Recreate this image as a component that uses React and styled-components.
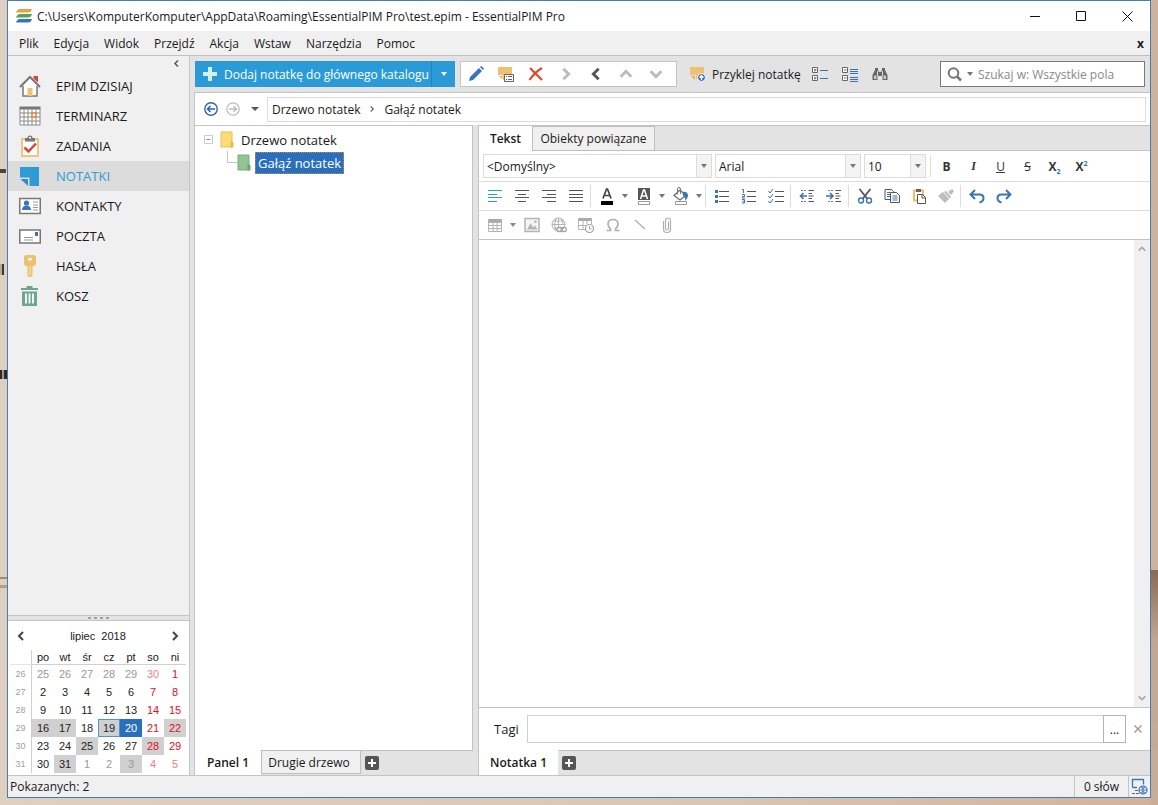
import { useState } from 'react';
import styled, { createGlobalStyle } from 'styled-components';

const GlobalStyle = createGlobalStyle`
  * {
    box-sizing: border-box;
  }
  body {
    margin: 0;
    font-family: 'Open Sans', 'Noto Sans', sans-serif;
    font-size: 12px;
    color: #1a1a1a;
  }
  button,
  input,
  select,
  textarea {
    font: inherit;
    color: inherit;
    margin: 0;
    padding: 0;
    border: 0;
    border-radius: 0;
    background: none;
    outline: none;
  }
  button {
    white-space: nowrap;
  }
  svg {
    display: block;
    flex: none;
  }
`;

const Desktop = styled.div`
  display: flex;
  height: 100vh;
  min-height: 600px;
  padding: 0 7px 7px;
  background:
    linear-gradient(#4a443f, #4a443f) 0 169px / 6px 4px no-repeat,
    linear-gradient(90deg, #b7a99c 2px, #3c3733 2px) 0 264px / 4px 11px no-repeat,
    linear-gradient(90deg, #2b2a29 2px, #a3968a 2px, #a3968a 4px, #2b2a29 4px) 0 370px / 7px 9px
      no-repeat,
    linear-gradient(#a08a76, #a08a76) 0 577px / 7px 2px no-repeat,
    linear-gradient(#b39e8b, #b39e8b) 0 585px / 7px 3px no-repeat,
    linear-gradient(#8d6a52, #c4a690 30%, #c9ad97) 100% 100% / 7px 235px no-repeat,
    linear-gradient(90deg, #dfcfc0, #d9c7b5 60%, #d0b29c);
`;
const Window = styled.div`
  flex: 1;
  min-width: 0;
  display: flex;
  flex-direction: column;
  border: 1px solid #3f7fb5;
  background: #e3e3e3;
`;
const TitleBar = styled.header`
  display: flex;
  align-items: center;
  height: 30px;
  padding-left: 8px;
  gap: 5px;
  background: #fff;
`;
const Title = styled.h1`
  flex: 1;
  margin: 0;
  font-size: 12px;
  font-weight: 400;
`;
const WindowButton = styled.button`
  display: grid;
  place-items: center;
  width: 46px;
  height: 30px;
  margin-left: -5px;
`;
const MenuBar = styled.nav`
  display: flex;
  align-items: center;
  height: 25px;
  padding: 0 6px 0 3px;
  background: #f0f0f0;
  border-bottom: 1px solid #bfbfbf;
`;
const MenuItem = styled.button`
  padding: 0 7px 0 8px;
`;
const MenuClose = styled.button`
  margin-left: auto;
  font-weight: 700;
`;

const Body = styled.div`
  flex: 1;
  min-height: 0;
  display: flex;
  gap: 4px;
`;
const Sidebar = styled.aside`
  display: flex;
  flex-direction: column;
  width: 182px;
  border-right: 1px solid #c4c4c4;
`;
const SidebarTop = styled.div`
  flex: 1;
  background: #f0f0f0;
  border-bottom: 1px solid #c4c4c4;
`;
const Collapse = styled.button`
  display: block;
  height: 15px;
  margin-left: auto;
  padding-right: 8px;
`;
const ModuleButton = styled.button`
  display: flex;
  align-items: center;
  gap: 15px;
  width: 100%;
  height: 30px;
  padding-left: 11px;
  font-size: 13px;
  font-weight: 500;
  color: ${({ $active }) => ($active ? '#2e9bd6' : '#1a1a1a')};
  background: ${({ $active }) => ($active ? '#dcdcdc' : 'transparent')};
`;
const Grip = styled.div`
  display: flex;
  align-items: center;
  justify-content: center;
  gap: 3px;
  height: 5px;
  border-bottom: 1px solid #c4c4c4;
`;
const GripDot = styled.i`
  width: 3px;
  height: 2px;
  background: #a0a0a0;
`;

const Calendar = styled.section`
  height: 154px;
  padding: 0 3px 0 2px;
  background: #fff;
  font-family: 'Liberation Sans', Arial, sans-serif;
  font-size: 11px;
`;
const CalendarHead = styled.div`
  display: flex;
  align-items: center;
  justify-content: space-between;
  height: 29px;
  padding: 0 5px;
  white-space: pre;
`;
const MonthTable = styled.table`
  width: 100%;
  table-layout: fixed;
  border-spacing: 0;
  text-align: center;

  th,
  td {
    height: 18px;
    padding: 0;
    font-weight: 400;
    line-height: 16px;
  }
  thead th {
    height: 15px;
    line-height: 12px;
    border-bottom: 1px solid #d0d0d0;
  }
  tr > :first-child {
    color: #a0a0a0;
    font-size: 9px;
    border-right: 1px solid #d0d0d0;
  }
  thead tr > :first-child {
    border-bottom-color: #e4e4e4;
  }
`;
const Day = styled.td`
  color: ${({ $outside, $weekend }) =>
    $weekend ? ($outside ? '#f08080' : '#e01020') : $outside ? '#999' : '#222'};
  ${({ $busy }) => $busy && 'background: #d0d0d0;'}
  ${({ $selected }) => $selected && 'background: #2a6fbd; color: #fff;'}
  ${({ $today }) => $today && 'box-shadow: inset 0 0 0 1px #4a96d0;'}
`;

const Workspace = styled.main`
  flex: 1;
  min-width: 0;
  display: flex;
  flex-direction: column;
`;
const Toolbar = styled.div`
  display: flex;
  align-items: center;
  height: 37px;
  padding: 0 5px 0 1px;
  border-bottom: 1px solid #c4c4c4;
`;
const AddNote = styled.div`
  display: flex;
  height: 26px;
  margin-right: 5px;
  color: #fff;
  background: #2b9bd8;
`;
const AddNoteButton = styled.button`
  display: flex;
  align-items: center;
  gap: 7px;
  width: 236px;
  padding-left: 8px;
`;
const AddNoteMore = styled.button`
  display: grid;
  place-items: center;
  width: 24px;
  border-left: 1px solid #2382ba;
`;
const ToolGroup = styled.div`
  display: flex;
  height: 26px;
  padding-right: 5px;
  margin-right: 12px;
  background: #fff;
  border: 1px solid #c4c4c4;
`;
const ToolButton = styled.button`
  display: grid;
  place-items: center;
  width: 30px;
  height: 24px;
`;
const StickButton = styled.button`
  display: flex;
  align-items: center;
  gap: 6px;
  height: 26px;
  margin-right: 4px;
`;
const Search = styled.label`
  display: flex;
  align-items: center;
  gap: 5px;
  width: 205px;
  height: 26px;
  margin-left: auto;
  padding-left: 6px;
  background: #fff;
  border: 1px solid #7a7a7a;
`;
const SearchInput = styled.input`
  flex: 1;
  min-width: 0;
  &::placeholder {
    color: #8a8a8a;
    opacity: 1;
  }
`;
const PathRow = styled.div`
  display: flex;
  align-items: center;
  height: 32px;
  padding: 0 4px 0 8px;
  background: #fff;
  border-left: 1px solid #c4c4c4;
`;
const PathButton = styled.button`
  display: grid;
  place-items: center;
  width: 16px;
  height: 24px;
  margin-right: 6px;
`;
const Path = styled.nav`
  flex: 1;
  display: flex;
  align-items: center;
  gap: 8px;
  height: 25px;
  margin-left: -2px;
  padding-left: 4px;
  border: 1px solid #dcdcdc;
`;
const PathLink = styled.a`
  color: inherit;
  text-decoration: none;
`;

const Panels = styled.div`
  flex: 1;
  min-height: 0;
  display: flex;
  gap: 5px;
`;
const TreePanel = styled.section`
  display: flex;
  flex-direction: column;
  width: 279px;
`;
const TreeArea = styled.div`
  flex: 1;
  padding: 2px 9px;
  background: #fff;
  border: 1px solid #c4c4c4;
  border-bottom: 0;
  font-size: 13px;
`;
const TreeRow = styled.div`
  display: flex;
  align-items: center;
  height: 23px;
  gap: ${({ $child }) => ($child ? 4 : 7)}px;
  padding-left: ${({ $child }) => ($child ? 23 : 0)}px;
`;
const TreeLabel = styled.span`
  ${({ $selected }) =>
    $selected &&
    `
    padding: 0 3px;
    line-height: 22px;
    color: #fff;
    background: #2a6fbd;
    outline: 1px dotted #c98a4a;
    outline-offset: -1px;
  `}
`;
const BottomTabs = styled.div`
  display: flex;
  height: 25px;
  border-left: 1px solid #c4c4c4;
`;
const TabFill = styled.div`
  flex: 1;
  display: flex;
  align-items: center;
  padding-left: 4px;
  border-top: 1px solid #c4c4c4;
`;
const BottomTab = styled.button`
  align-self: flex-start;
  width: ${({ $width }) => $width}px;
  height: ${({ $active }) => ($active ? 25 : 24)}px;
  padding-right: ${({ $active }) => ($active ? 0 : 4)}px;
  font-weight: ${({ $active }) => ($active ? 600 : 400)};
  background: ${({ $active }) => ($active ? '#fff' : '#f0f0f0')};
  border: ${({ $active }) => ($active ? '0' : '1px solid #bfbfbf')};
`;
const NotePanel = styled.section`
  flex: 1;
  min-width: 0;
  display: flex;
  flex-direction: column;
`;
const NoteTabs = styled.div`
  display: flex;
  height: 26px;
  border: 1px solid #c4c4c4;
  border-width: 1px 0 0 1px;
`;
const NoteTab = styled.button`
  width: ${({ $width }) => $width}px;
  height: 25px;
  font-weight: ${({ $active }) => ($active ? 600 : 400)};
  background: ${({ $active }) => ($active ? '#fff' : '#f0f0f0')};
  border: ${({ $active }) => ($active ? '0' : '1px solid #bfbfbf')};
`;
const TabRest = styled.div`
  flex: 1;
  border-bottom: 1px solid #c4c4c4;
`;
const NoteBody = styled.div`
  flex: 1;
  min-height: 0;
  display: flex;
  flex-direction: column;
  background: #fff;
  border-left: 1px solid #c4c4c4;
`;
const FormatRow = styled.div`
  display: flex;
  align-items: center;
  height: ${({ $height }) => $height}px;
  padding-left: ${({ $inset }) => $inset || 2}px;
  border-bottom: 1px solid ${({ $last }) => ($last ? '#c4c4c4' : '#dcdcdc')};
`;
const SelectBox = styled.div`
  display: grid;
  grid-template-columns: 1fr 15px;
  width: ${({ $width }) => $width}px;
  height: 24px;
  margin-right: 3px;
  border: 1px solid #dcdcdc;
`;
const SelectField = styled.select`
  grid-area: 1 / 1 / 2 / 3;
  width: 100%;
  padding-left: 3px;
  appearance: none;
`;
const SelectArrow = styled.span`
  grid-area: 1 / 2;
  display: grid;
  place-items: center;
  pointer-events: none;
  background: #f4f4f4;
  border-left: 1px solid #dcdcdc;
`;
const Divider = styled.i`
  width: 1px;
  height: 22px;
  margin: 0 2px 0 1px;
  background: #dcdcdc;
`;
const FormatButton = styled.button`
  display: grid;
  place-items: center;
  width: ${({ $narrow }) => ($narrow ? 10 : 27)}px;
  height: 24px;
  color: #333;
`;
const Letter = styled.span`
  font-size: 12px;
  font-weight: ${({ $light }) => ($light ? 500 : 700)};
  font-style: ${({ $italic }) => ($italic ? 'italic' : 'normal')};
  font-family: ${({ $italic }) => ($italic ? "'Liberation Serif', serif" : 'inherit')};
  text-decoration: ${({ $line }) => $line || 'none'};
  sub,
  sup {
    font-size: 7px;
    line-height: 0;
    color: #2a6fbd;
  }
`;
const Editor = styled.div`
  flex: 1;
  display: flex;
`;
const EditorText = styled.textarea`
  flex: 1;
  padding: 4px;
  resize: none;
  font-family: 'Liberation Sans', Arial, sans-serif;
`;
const ScrollTrack = styled.div`
  display: flex;
  flex-direction: column;
  justify-content: space-between;
  width: 16px;
  background: #f0f0f0;
`;
const ScrollButton = styled.button`
  display: grid;
  place-items: center;
  height: 18px;
`;
const TagRow = styled.div`
  display: flex;
  align-items: center;
  height: 43px;
  padding-left: 15px;
  border-top: 1px solid #c4c4c4;
`;
const TagLabel = styled.label`
  width: 33px;
  font-size: 13px;
`;
const TagInput = styled.input`
  flex: 1;
  min-width: 0;
  height: 28px;
  padding: 0 4px;
  border: 1px solid #d0d0d0;
`;
const TagMore = styled.button`
  width: 23px;
  height: 28px;
  margin-left: -1px;
  border: 1px solid #b4b4b4;
`;
const TagClose = styled.button`
  display: grid;
  place-items: center;
  width: 24px;
  height: 28px;
`;
const StatusBar = styled.footer`
  display: flex;
  align-items: center;
  height: 22px;
  padding-left: 2px;
  background: #f0f0f0;
  border-top: 1px solid #c4c4c4;
`;
const StatusCell = styled.div`
  display: grid;
  place-items: center;
  width: ${({ $width }) => $width}px;
  height: 21px;
  border-left: 1px solid #c4c4c4;
`;
const Spacer = styled.span`
  flex: 1;
`;

function Icon({ w = 18, h = 18, children, ...rest }) {
  return (
    <svg width={w} height={h} viewBox={`0 0 ${w} ${h}`} fill="none" aria-hidden="true" {...rest}>
      {children}
    </svg>
  );
}

function Chevron({ dir = 'right', color = '#555', size = 12, stroke = 2 }) {
  const paths = {
    right: 'M4 2l4 4-4 4',
    left: 'M8 2L4 6l4 4',
    up: 'M2 8l4-4 4 4',
    down: 'M2 4l4 4 4-4',
  };
  return (
    <svg width={size} height={size} viewBox="0 0 12 12" fill="none" aria-hidden="true">
      <path d={paths[dir]} stroke={color} strokeWidth={stroke} />
    </svg>
  );
}

function Caret({ color = '#777', w = 6 }) {
  return (
    <svg width={w} height="4" viewBox="0 0 6 4" preserveAspectRatio="none" aria-hidden="true">
      <path d="M0 0h6L3 4z" fill={color} />
    </svg>
  );
}

function PlusBox() {
  return (
    <Icon w={14} h={14}>
      <rect width="14" height="14" rx="2" fill="#555" />
      <path d="M7 3v8M3 7h8" stroke="#fff" strokeWidth="2" />
    </Icon>
  );
}

const moduleIcons = {
  home: (
    <Icon w={22} h={22}>
      <path d="M14.500 1h4.500v6.500l-4.500-4z" fill="#d9453d" />
      <path d="M4 11v10h14V11L11 3.5z" fill="#fff" />
      <path d="M4 11v10h14V11" stroke="#777" strokeWidth="1.5" />
      <path d="M1 12L11 2l10 10" stroke="#777" strokeWidth="2" />
      <path d="M8.500 13h5v8h-5z" fill="#eec277" />
    </Icon>
  ),
  calendar: (
    <Icon w={22} h={22}>
      <path d="M1 3h20v17H1z" fill="#fff" />
      <path d="M.5 1.500h21v3H.5z" fill="#777" />
      <path
        d="M1 4v16M5 4v16M9 4v16M13 4v16M17 4v16M21 4v16M1 8h20M1 12h20M1 16h20M1 20h20"
        stroke="#8a8a8a"
      />
      <path d="M13 8h4v4h-4z" fill="#fff" stroke="#e58a3c" strokeWidth="1.500" />
    </Icon>
  ),
  tasks: (
    <Icon w={22} h={22}>
      <path d="M3 4h16v17H3z" fill="#fff" stroke="#f2c480" strokeWidth="2" />
      <path d="M6 3h2.500a2.500 2.500 0 0 1 5 0H16v3.500H6z" fill="#777" />
      <circle cx="11" cy="2.800" r="1" fill="#fff" />
      <path d="M5.500 12.500l4 4 7.500-8" stroke="#d9453d" strokeWidth="2.500" />
    </Icon>
  ),
  notes: (
    <Icon w={22} h={22}>
      <path d="M1 2h19v19h-9.500v-8.500H1z" fill="#2e9bd6" />
      <path d="M1.500 14H9v7z" fill="#2a8fc8" />
    </Icon>
  ),
  contacts: (
    <Icon w={22} h={22}>
      <path d="M.750 3.500h20.500v15H.750z" fill="#fff" stroke="#777" strokeWidth="1.500" />
      <circle cx="7.500" cy="8" r="2.600" fill="#3a74b8" />
      <path d="M3 15c0-3 2-4.500 4.500-4.500S12 12 12 15z" fill="#3a74b8" />
      <path d="M14 7h5M14 10h5M14 12.500h5M14 15h5" stroke="#999" />
    </Icon>
  ),
  mail: (
    <Icon w={22} h={22}>
      <path d="M.750 5h20.500v13H.750z" fill="#fff" stroke="#777" strokeWidth="1.500" />
      <path d="M16 7h3v4h-3z" fill="#3a74b8" />
      <path d="M5 12.500h9M5 15h9" stroke="#999" />
    </Icon>
  ),
  key: (
    <Icon w={22} h={22}>
      <path
        fillRule="evenodd"
        d="M5 1.500L7 0h8l2 1.500v8L13.500 12v9L11 22.500 8.500 21v-9L5 9.500zM9 3v2.500h4V3z"
        fill="#ecc270"
      />
      <path d="M11 11v9" stroke="#fff" strokeWidth="1" opacity=".7" />
    </Icon>
  ),
  trash: (
    <Icon w={22} h={22}>
      <path d="M2 3h17v2H2zM7.500 1h6v2h-6z" fill="#6fa58e" />
      <path d="M3 6.500h15V21H3z" fill="#6fa58e" />
      <path d="M7 8.500v10M10.500 8.500v10M14 8.500v10" stroke="#fff" strokeWidth="1.800" />
    </Icon>
  ),
};

const modules = [
  ['home', 'EPIM DZISIAJ'],
  ['calendar', 'TERMINARZ'],
  ['tasks', 'ZADANIA'],
  ['notes', 'NOTATKI'],
  ['contacts', 'KONTAKTY'],
  ['mail', 'POCZTA'],
  ['key', 'HASŁA'],
  ['trash', 'KOSZ'],
];

const menu = ['Plik', 'Edycja', 'Widok', 'Przejdź', 'Akcja', 'Wstaw', 'Narzędzia', 'Pomoc'];
const weekdays = ['po', 'wt', 'śr', 'cz', 'pt', 'so', 'ni'];
const weeks = [26, 27, 28, 29, 30, 31];
const busyDays = [16, 17, 19, 22, 25, 28, 31, 34];

function MonthCalendar() {
  return (
    <Calendar>
      <CalendarHead>
        <button type="button" aria-label="Poprzedni miesiąc">
          <Chevron dir="left" color="#444" />
        </button>
        {'lipiec  2018'}
        <button type="button" aria-label="Następny miesiąc">
          <Chevron color="#444" />
        </button>
      </CalendarHead>
      <MonthTable>
        <thead>
          <tr>
            <th />
            {weekdays.map((name) => (
              <th key={name}>{name}</th>
            ))}
          </tr>
        </thead>
        <tbody>
          {weeks.map((week, row) => (
            <tr key={week}>
              <th>{week}</th>
              {weekdays.map((name, col) => {
                // July 2018 starts on the last column of the first row
                const day = row * 7 + col - 5;
                const label = day < 1 ? day + 30 : day > 31 ? day - 31 : day;
                return (
                  <Day
                    key={name}
                    $outside={day < 1 || day > 31}
                    $weekend={col > 4}
                    $busy={busyDays.includes(day)}
                    $today={day === 19}
                    $selected={day === 20}
                  >
                    {label}
                  </Day>
                );
              })}
            </tr>
          ))}
        </tbody>
      </MonthTable>
    </Calendar>
  );
}

function Select({ label, width, value }) {
  return (
    <SelectBox $width={width}>
      <SelectField aria-label={label} defaultValue={value}>
        <option>{value}</option>
      </SelectField>
      <SelectArrow>
        <Caret />
      </SelectArrow>
    </SelectBox>
  );
}

function Tool({ label, children, narrow }) {
  return (
    <FormatButton type="button" aria-label={label} $narrow={narrow}>
      {children}
    </FormatButton>
  );
}

function Lines({ d, color = '#555' }) {
  return (
    <Icon w={16} h={16}>
      <path d={d} stroke={color} />
    </Icon>
  );
}

function TextTools() {
  return (
    <FormatRow $height={29}>
      <Tool label="Do lewej">
        <Lines color="#2b9bd8" d="M1 2.500h14M1 6.500h9M1 9.500h14M1 13.500h9" />
      </Tool>
      <Tool label="Wyśrodkuj">
        <Lines d="M1 2.500h14M4 6.500h8M1 9.500h14M4 13.500h8" />
      </Tool>
      <Tool label="Do prawej">
        <Lines d="M1 2.500h14M6 6.500h9M1 9.500h14M6 13.500h9" />
      </Tool>
      <Tool label="Wyjustuj">
        <Lines d="M1 2.500h14M1 6.500h14M1 9.500h14M1 13.500h14" />
      </Tool>
      <Divider />
      <Tool label="Kolor tekstu">
        <Icon w={16} h={18}>
          <path d="M4 11.500L7.500 2h1L12 11.500M5.500 8.500h5" stroke="#444" strokeWidth="1.700" />
          <path d="M2 14h12v4H2z" fill="#000" />
        </Icon>
      </Tool>
      <Tool label="Wybierz kolor tekstu" narrow>
        <Caret />
      </Tool>
      <Tool label="Wyróżnienie">
        <Icon w={16} h={18}>
          <path d="M2 1h12v12H2z" fill="#555" />
          <path d="M4.500 12L7.500 3h1L11.500 12M5.500 9h5" stroke="#fff" strokeWidth="1.500" />
          <path d="M2.500 14.500h11v3h-11z" fill="#fff" stroke="#999" />
        </Icon>
      </Tool>
      <Tool label="Wybierz kolor wyróżnienia" narrow>
        <Caret />
      </Tool>
      <Tool label="Wypełnienie">
        <Icon w={16} h={18}>
          <path d="M1 8.500l6-5.500 6 5.500-6 4.500z" fill="#fff" stroke="#666" strokeWidth="1.200" />
          <path d="M4.500 7.500V2q0-1.500 1.500-1.500T7.500 2v5" stroke="#777" />
          <path d="M9.500 5q5-1 5.500 3.500 0 3-3 5.500 1-4-2-5z" fill="#3a74b8" />
          <path d="M2.500 14.500h11v3h-11z" fill="#fff" stroke="#999" />
        </Icon>
      </Tool>
      <Tool label="Wybierz wypełnienie" narrow>
        <Caret />
      </Tool>
      <Divider />
      <Tool label="Lista punktowana">
        <Icon w={16} h={16}>
          <path d="M5 3.500h10M5 8.500h10M5 13.500h10" stroke="#555" />
          <path d="M1 2h3v3H1zM1 7h3v3H1zM1 12h3v3H1z" fill="#3a74b8" />
        </Icon>
      </Tool>
      <Tool label="Lista numerowana">
        <Icon w={16} h={16}>
          <path d="M6 3.500h9M6 8.500h9M6 13.500h9" stroke="#555" />
          <path
            d="M1 1.500h1.500V5M1 6.500h2.500v2H1.500v1.500H4M1 11.500h2.500V15H1M1.500 13.300h2"
            stroke="#3a74b8"
          />
        </Icon>
      </Tool>
      <Tool label="Lista zadań">
        <Icon w={16} h={16}>
          <path d="M7 3.500h9M7 8.500h9M7 13.500h9" stroke="#555" />
          <path d="M.5 3l1.500 2L5 1M.5 8L2 10l3-4M.5 13L2 15l3-4" stroke="#3a74b8" />
        </Icon>
      </Tool>
      <Divider />
      <Tool label="Zmniejsz wcięcie">
        <Icon w={16} h={16}>
          <path d="M2 2.500h6M2 13.500h6" stroke="#777" strokeDasharray="2 1" />
          <path d="M9.500 2.500H15M9.500 5.500H13M9.500 10.500H13M9.500 13.500H15M9.500 8h5" stroke="#555" />
          <path d="M8 8H1.500M4.500 5L1.500 8l3 3" stroke="#3a74b8" strokeWidth="1.600" />
        </Icon>
      </Tool>
      <Tool label="Zwiększ wcięcie">
        <Icon w={16} h={16}>
          <path d="M2 2.500h6M2 13.500h6" stroke="#777" strokeDasharray="2 1" />
          <path d="M9.500 2.500H15M9.500 5.500H13M9.500 10.500H13M9.500 13.500H15M9.500 8h5" stroke="#555" />
          <path d="M0 8h6.500M4 5l3 3-3 3" stroke="#3a74b8" strokeWidth="1.600" />
        </Icon>
      </Tool>
      <Divider />
      <Tool label="Wytnij">
        <Icon w={16} h={16}>
          <path d="M2.500 1l8 10M13.500 1l-8 10" stroke="#555" strokeWidth="1.800" />
          <circle cx="4" cy="12.500" r="2.500" stroke="#3a74b8" strokeWidth="1.400" />
          <circle cx="12" cy="12.500" r="2.500" stroke="#3a74b8" strokeWidth="1.400" />
        </Icon>
      </Tool>
      <Tool label="Kopiuj">
        <Icon w={16} h={16}>
          <path d="M1 1.500h6.500l2 2v8H1z" fill="#fff" stroke="#555" />
          <path d="M6.500 4.500h6l3 3v7h-9z" fill="#fff" stroke="#555" />
          <path d="M3 4.500h3M3 6.500h3M3 8.500h3M8.500 8h5M8.500 10h5M8.500 12h5" stroke="#3a74b8" />
        </Icon>
      </Tool>
      <Tool label="Wklej">
        <Icon w={16} h={16}>
          <path d="M3 2.500h9v10H3z" stroke="#eac464" strokeWidth="2" />
          <path d="M5 1h5v3H5z" fill="#666" />
          <path d="M6.500 6.500h5l3 3v6h-8z" fill="#fff" stroke="#555" />
          <path d="M11 6.500V10h3.500" stroke="#555" />
        </Icon>
      </Tool>
      <Tool label="Malarz formatów">
        <Icon w={16} h={16}>
          <path d="M0 8l5-4 6 7-4 4zM6 4l2-1 5 6-1.500 1.500zM10 4l4-3 2 2-3 4z" fill="#bdbdbd" />
        </Icon>
      </Tool>
      <Divider />
      <Tool label="Cofnij">
        <Icon w={16} h={16}>
          <path d="M2 6.500h8.500q4 0 4 3.500t-4 4.500M6 2L1.500 6.500 6 11" stroke="#3a74b8" strokeWidth="2" />
        </Icon>
      </Tool>
      <Tool label="Ponów">
        <Icon w={16} h={16}>
          <path d="M14 6.500H5.500q-4 0-4 3.500t4 4.500M10 2l4.500 4.500L10 11" stroke="#3a74b8" strokeWidth="2" />
        </Icon>
      </Tool>
    </FormatRow>
  );
}

function InsertTools() {
  return (
    <FormatRow $height={29} $last>
      <Tool label="Tabela">
        <Icon w={14} h={14}>
          <path d="M.5 1h13v3H.5z" fill="#aaa" />
          <path d="M.5 1v12.500h13V1M.5 4.500h13M.5 7.500h13M.5 10.500h13M5 4v9.500M9 4v9.500" stroke="#b4b4b4" />
        </Icon>
      </Tool>
      <Tool label="Rozmiar tabeli" narrow>
        <Caret color="#888" />
      </Tool>
      <Tool label="Obraz">
        <Icon w={16} h={16}>
          <path d="M1 1.500h14v13H1z" fill="#f4f4f4" stroke="#b4b4b4" strokeWidth="1.500" />
          <path d="M3 12.500l3.500-6 3 4 1.500-2 2.500 4z" fill="#b4b4b4" />
          <circle cx="11.500" cy="4.800" r="1.300" fill="#b4b4b4" />
        </Icon>
      </Tool>
      <Tool label="Łącze">
        <Icon w={16} h={16}>
          <circle cx="7.500" cy="7.500" r="6.500" stroke="#b4b4b4" />
          <path d="M7.500 1v10M1 7.500h13M2.500 4h10M2.500 11h6M5 1.500q-3 6 0 12M10 1.500q2 3 2 6" stroke="#b4b4b4" />
          <rect x="6" y="10.500" width="5.500" height="4" rx="2" fill="#fff" stroke="#a4a4a4" strokeWidth="1.300" />
          <rect x="10" y="10.500" width="5.500" height="4" rx="2" stroke="#a4a4a4" strokeWidth="1.300" />
        </Icon>
      </Tool>
      <Tool label="Data i godzina">
        <Icon w={16} h={16}>
          <path d="M.5 1h13v3H.5z" fill="#aaa" />
          <path d="M.5 1v11.500h7M13.500 1v6M.5 8.500h8M5 4v8M9 4v3" stroke="#b4b4b4" />
          <circle cx="11.500" cy="11.500" r="4" fill="#fff" stroke="#a4a4a4" strokeWidth="1.200" />
          <path d="M11.500 9v3h2" stroke="#a4a4a4" />
        </Icon>
      </Tool>
      <Tool label="Symbol">
        <Icon w={16} h={16}>
          <path
            d="M1.500 13.500h4v-1.500Q3 10 3 7.300 3 2.500 8 2.500t5 4.800q0 2.700-2.500 4.700v1.500h4"
            stroke="#b0b0b0"
            strokeWidth="1.700"
          />
        </Icon>
      </Tool>
      <Tool label="Linia">
        <Icon w={16} h={16}>
          <path d="M3 3l10 9" stroke="#b0b0b0" strokeWidth="1.300" />
        </Icon>
      </Tool>
      <Tool label="Załącznik">
        <Icon w={10} h={16}>
          <path
            d="M6.500 4.500v7a1.500 1.500 0 0 1-3 0V3.500a2.500 2.500 0 0 1 5-0V12a3.500 3.500 0 0 1-7 0V4"
            stroke="#b0b0b0"
            strokeWidth="1.200"
          />
        </Icon>
      </Tool>
    </FormatRow>
  );
}

function MainToolbar() {
  return (
    <Toolbar>
      <AddNote>
        <AddNoteButton type="button">
          <Icon w={14} h={14}>
            <path d="M5 0h4v5h5v4H9v5H5V9H0V5h5z" fill="#d5f0e4" />
          </Icon>
          Dodaj notatkę do głównego katalogu
        </AddNoteButton>
        <AddNoteMore type="button" aria-label="Więcej">
          <Caret color="#fff" />
        </AddNoteMore>
      </AddNote>
      <ToolGroup>
        <ToolButton type="button" aria-label="Edytuj">
          <Icon w={16} h={16}>
            <path d="M1 15l1-4L11 2l3 3-9 9zM12 1l1.500-1L16 2.500 15 4z" fill="#3a74b8" />
          </Icon>
        </ToolButton>
        <ToolButton type="button" aria-label="Właściwości">
          <Icon w={18} h={16}>
            <path d="M1 1h14v7H7v6H6V9H1z" fill="#f0c070" />
            <path d="M2 10h3.500v3.500z" fill="#e5b257" />
            <path d="M7.500 8.500h9v7h-9z" fill="#fff" stroke="#666" />
            <path d="M9 10.500h1M9 13.500h1M11 10.500h4M11 13.500h4" stroke="#666" />
          </Icon>
        </ToolButton>
        <ToolButton type="button" aria-label="Usuń">
          <Icon w={16} h={14}>
            <path d="M2 1l12 12M14 1Q7 5 1.500 13" stroke="#dd4b2e" strokeWidth="2.200" />
          </Icon>
        </ToolButton>
        <ToolButton type="button" aria-label="W prawo">
          <Chevron color="#bbb" size={16} stroke={2.2} />
        </ToolButton>
        <ToolButton type="button" aria-label="W lewo">
          <Chevron dir="left" color="#555" size={16} stroke={2.2} />
        </ToolButton>
        <ToolButton type="button" aria-label="W górę">
          <Chevron dir="up" color="#bbb" size={16} stroke={2.2} />
        </ToolButton>
        <ToolButton type="button" aria-label="W dół">
          <Chevron dir="down" color="#bbb" size={16} stroke={2.2} />
        </ToolButton>
      </ToolGroup>
      <StickButton type="button">
        <Icon w={17} h={16}>
          <path d="M1 1h14v12H7V9H1z" fill="#f0c070" />
          <path d="M2 10h4v4z" fill="#e5b257" />
          <circle cx="12.500" cy="11.500" r="4" fill="#3a74b8" stroke="#fff" />
          <path d="M12.500 14V9.500M10.500 11.500l2-2 2 2" stroke="#fff" strokeWidth="1.200" />
        </Icon>
        Przyklej notatkę
      </StickButton>
      <ToolButton type="button" aria-label="Rozwiń">
        <Icon w={16} h={16}>
          <path d="M.5 1.500h5v5h-5zM.5 9.500h5v5h-5z" fill="#fff" stroke="#666" />
          <path d="M2 4h2.500M3 3v2.500M2 12h2.500M3 11v2.500" stroke="#666" />
          <path d="M8 4.500h8M8 12.500h8" stroke="#3a74b8" />
        </Icon>
      </ToolButton>
      <ToolButton type="button" aria-label="Zwiń">
        <Icon w={16} h={16}>
          <path d="M.5 1.500h5v5h-5zM.5 9.500h5v5h-5z" fill="#fff" stroke="#666" />
          <path d="M2 4h2.500M2 12h2.500" stroke="#666" />
          <path d="M8 3.500h8M8 5.500h8M8 7.500h8M8 11.500h8M8 13.500h8M8 15.500h8" stroke="#3a74b8" />
        </Icon>
      </ToolButton>
      <ToolButton type="button" aria-label="Znajdź">
        <Icon w={16} h={14}>
          <path d="M3 1h3v2l1 2h2l1-2V1h3v2l2.500 5v5h-5V9h-5v4H.5V8L3 3z" fill="#666" />
          <path d="M2 8.500h2.500V12H2zM11.500 8.500H14V12h-2.500z" fill="#c9c9c9" />
          <path d="M5.500 4v5M10.500 4v5" stroke="#ddd" />
        </Icon>
      </ToolButton>
      <Search>
        <Icon w={15} h={16}>
          <circle cx="6.500" cy="7" r="4.800" stroke="#777" strokeWidth="2" />
          <path d="M10 10.500l4 4" stroke="#777" strokeWidth="2.500" />
        </Icon>
        <Caret />
        <SearchInput aria-label="Szukaj" placeholder="Szukaj w: Wszystkie pola" />
      </Search>
    </Toolbar>
  );
}

function App() {
  const [activeModule, setActiveModule] = useState('notes');

  return (
    <Desktop>
      <GlobalStyle />
      <Window>
        <TitleBar>
          <Icon w={16} h={14}>
            <path d="M4 0h12q-1 3.500-4 3.500H0Q1 0 4 0z" fill="#e8a33d" />
            <path d="M4 5h12q-1 3.500-4 3.500H0Q1 5 4 5z" fill="#58a05c" />
            <path d="M4 10h12q-1 3.500-4 3.500H0Q1 10 4 10z" fill="#3a74b8" />
          </Icon>
          <Title>
            C:\Users\KomputerKomputer\AppData\Roaming\EssentialPIM Pro\test.epim - EssentialPIM Pro
          </Title>
          <WindowButton type="button" aria-label="Minimalizuj">
            <Icon w={11} h={11}>
              <path d="M0 5.500h10" stroke="#111" />
            </Icon>
          </WindowButton>
          <WindowButton type="button" aria-label="Maksymalizuj">
            <Icon w={11} h={11}>
              <path d="M.5.5h9v9h-9z" stroke="#111" />
            </Icon>
          </WindowButton>
          <WindowButton type="button" aria-label="Zamknij">
            <Icon w={11} h={11}>
              <path d="M.5.500l10 10M10.500.500l-10 10" stroke="#111" />
            </Icon>
          </WindowButton>
        </TitleBar>
        <MenuBar>
          {menu.map((name) => (
            <MenuItem type="button" key={name}>
              {name}
            </MenuItem>
          ))}
          <MenuClose type="button">x</MenuClose>
        </MenuBar>

        <Body>
          <Sidebar>
            <SidebarTop>
              <Collapse type="button" aria-label="Zwiń panel">
                <Chevron dir="left" size={9} />
              </Collapse>
              {modules.map(([id, name]) => (
                <ModuleButton
                  type="button"
                  key={id}
                  $active={id === activeModule}
                  onClick={() => setActiveModule(id)}
                >
                  {moduleIcons[id]}
                  {name}
                </ModuleButton>
              ))}
            </SidebarTop>
            <Grip>
              <GripDot />
              <GripDot />
              <GripDot />
              <GripDot />
            </Grip>
            <MonthCalendar />
          </Sidebar>

          <Workspace>
            <MainToolbar />
            <PathRow>
              <PathButton type="button" aria-label="Wstecz">
                <Icon w={14} h={14}>
                  <circle cx="7" cy="7" r="6.200" stroke="#2f66ad" strokeWidth="1.400" />
                  <path d="M11 7H3.500M6.500 4l-3 3 3 3" stroke="#2f66ad" strokeWidth="1.600" />
                </Icon>
              </PathButton>
              <PathButton type="button" aria-label="Dalej">
                <Icon w={14} h={14}>
                  <circle cx="7" cy="7" r="6.200" stroke="#bbb" strokeWidth="1.200" />
                  <path d="M3 7h7.500M7.500 4l3 3-3 3" stroke="#bbb" strokeWidth="1.300" />
                </Icon>
              </PathButton>
              <PathButton type="button" aria-label="Historia">
                <Caret color="#555" w={8} />
              </PathButton>
              <Path>
                <PathLink href="#drzewo">Drzewo notatek</PathLink>
                <Chevron size={8} stroke={1.6} />
                <PathLink href="#galaz">Gałąź notatek</PathLink>
              </Path>
            </PathRow>

            <Panels>
              <TreePanel>
                <TreeArea>
                  <TreeRow>
                    <Icon w={9} h={9}>
                      <path d="M.5.500h8v8h-8z" fill="#fff" stroke="#ccc" />
                      <path d="M2.500 4.500h4" stroke="#888" />
                    </Icon>
                    <Icon w={14} h={17}>
                      <path d="M1 1h11v15H1z" fill="#fbdc78" stroke="#ecc04e" />
                      <path d="M10.500 9.500l3 2V16.500h-3z" fill="#e9bb48" />
                    </Icon>
                    <TreeLabel>Drzewo notatek</TreeLabel>
                  </TreeRow>
                  <TreeRow $child>
                    <Icon w={24} h={23}>
                      <path d="M.5 0v11.500H10" stroke="#c4c4c4" />
                      <path d="M11 4h11v15H11z" fill="#92c492" stroke="#78ad7a" />
                      <path d="M20.500 12.500l3 2V19.500h-3z" fill="#6fa672" />
                    </Icon>
                    <TreeLabel $selected>Gałąź notatek</TreeLabel>
                  </TreeRow>
                </TreeArea>
                <BottomTabs>
                  <BottomTab type="button" $active $width={66}>
                    Panel 1
                  </BottomTab>
                  <BottomTab type="button" $width={100}>
                    Drugie drzewo
                  </BottomTab>
                  <TabFill>
                    <button type="button" aria-label="Dodaj panel">
                      <PlusBox />
                    </button>
                  </TabFill>
                </BottomTabs>
              </TreePanel>

              <NotePanel>
                <NoteTabs>
                  <NoteTab type="button" $active $width={53}>
                    Tekst
                  </NoteTab>
                  <NoteTab type="button" $width={123}>
                    Obiekty powiązane
                  </NoteTab>
                  <TabRest />
                </NoteTabs>
                <NoteBody>
                  <FormatRow $height={31} $inset={4}>
                    <Select label="Styl" width={229} value="<Domyślny>" />
                    <Select label="Czcionka" width={146} value="Arial" />
                    <Select label="Rozmiar" width={62} value="10" />
                    <Divider />
                    <Tool label="Pogrubienie">
                      <Letter>B</Letter>
                    </Tool>
                    <Tool label="Kursywa">
                      <Letter $italic>I</Letter>
                    </Tool>
                    <Tool label="Podkreślenie">
                      <Letter $light $line="underline">
                        U
                      </Letter>
                    </Tool>
                    <Tool label="Przekreślenie">
                      <Letter $light $line="line-through">
                        S
                      </Letter>
                    </Tool>
                    <Tool label="Indeks dolny">
                      <Letter>
                        X<sub>2</sub>
                      </Letter>
                    </Tool>
                    <Tool label="Indeks górny">
                      <Letter>
                        X<sup>2</sup>
                      </Letter>
                    </Tool>
                  </FormatRow>
                  <TextTools />
                  <InsertTools />
                  <Editor>
                    <EditorText aria-label="Treść notatki" />
                    <ScrollTrack>
                      <ScrollButton type="button" aria-label="Przewiń w górę">
                        <Chevron dir="up" color="#aaa" size={10} />
                      </ScrollButton>
                      <ScrollButton type="button" aria-label="Przewiń w dół">
                        <Chevron dir="down" color="#aaa" size={10} />
                      </ScrollButton>
                    </ScrollTrack>
                  </Editor>
                  <TagRow>
                    <TagLabel htmlFor="tags">Tagi</TagLabel>
                    <TagInput id="tags" />
                    <TagMore type="button">...</TagMore>
                    <TagClose type="button" aria-label="Zamknij tagi">
                      <Icon w={8} h={8}>
                        <path d="M.5.500l7 7M7.500.500l-7 7" stroke="#999" strokeWidth="1.400" />
                      </Icon>
                    </TagClose>
                  </TagRow>
                </NoteBody>
                <BottomTabs>
                  <BottomTab type="button" $active $width={79}>
                    Notatka 1
                  </BottomTab>
                  <TabFill>
                    <button type="button" aria-label="Dodaj notatkę">
                      <PlusBox />
                    </button>
                  </TabFill>
                </BottomTabs>
              </NotePanel>
            </Panels>
          </Workspace>
        </Body>

        <StatusBar>
          Pokazanych: 2
          <Spacer />
          <StatusCell $width={54}>0 słów</StatusCell>
          <StatusCell $width={22}>
            <Icon w={17} h={17}>
              <path d="M1.500 9.500v-8h11v5M1.500 9.500H6" stroke="#3a74b8" strokeWidth="1.300" />
              <path d="M4 12.500h4M1 15.500h7" stroke="#666" strokeDasharray="3 1" />
              <circle cx="12" cy="12" r="4" fill="#fff" stroke="#3a74b8" strokeWidth="1.200" />
              <path d="M12 8v8M8 12h8M9.500 9.500q2.500 1.500 5 0M9.500 14.500q2.500-1.500 5 0" stroke="#3a74b8" />
            </Icon>
          </StatusCell>
        </StatusBar>
      </Window>
    </Desktop>
  );
}

export default App;
